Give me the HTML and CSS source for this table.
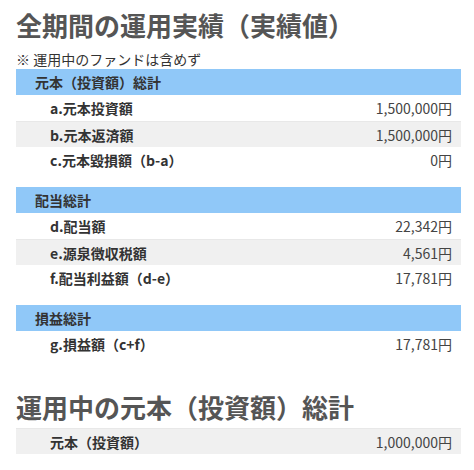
FILE: index.html
```html
<!DOCTYPE html>
<html lang="ja">
<head>
  <meta charset="UTF-8" />
  <meta name="viewport" content="width=device-width, initial-scale=1.0"/>
  <title>運用実績</title>
  <link rel="stylesheet" href="styles.css">
</head>
<body>
  <div class="container">
    <h1>全期間の運用実績（実績値）</h1>
    <p class="note">※ 運用中のファンドは含めず</p>

    <div class="group">
      <div class="group-head">元本（投資額）総計</div>
      <div class="row"><span class="label">a.元本投資額</span><span class="value">1,500,000円</span></div>
      <div class="row alt"><span class="label">b.元本返済額</span><span class="value">1,500,000円</span></div>
      <div class="row"><span class="label">c.元本毀損額（b-a）</span><span class="value">0円</span></div>
    </div>

    <div class="group">
      <div class="group-head">配当総計</div>
      <div class="row"><span class="label">d.配当額</span><span class="value">22,342円</span></div>
      <div class="row alt"><span class="label">e.源泉徴収税額</span><span class="value">4,561円</span></div>
      <div class="row"><span class="label">f.配当利益額（d-e）</span><span class="value">17,781円</span></div>
    </div>

    <div class="group">
      <div class="group-head">損益総計</div>
      <div class="row"><span class="label">g.損益額（c+f）</span><span class="value">17,781円</span></div>
    </div>

    <h1 class="second">運用中の元本（投資額）総計</h1>
    <div class="group">
      <div class="row alt"><span class="label">元本（投資額）</span><span class="value">1,000,000円</span></div>
    </div>
  </div>
</body>
</html>
```

FILE: styles.css
```css
* {
  margin: 0;
  padding: 0;
  box-sizing: border-box;
}

body {
  background: #ffffff;
  font-family: 'Noto Sans CJK JP', 'Noto Sans', sans-serif;
  color: #333;
}

.container {
  width: 445px;
  margin-left: 16px;
}

h1 {
  font-size: 26px;
  font-weight: bold;
  color: #555;
  line-height: 34px;
  padding-top: 8px;
}

h1.second {
  padding-top: 0;
  margin-top: 33px;
  margin-bottom: 4px;
}

.note {
  font-size: 14px;
  line-height: 18px;
  margin-top: 8px;
  margin-bottom: 1px;
}

.group {
  margin-bottom: 14px;
}

.group-head {
  background-color: #90c8f8;
  height: 26px;
  line-height: 26px;
  padding-left: 19px;
  font-size: 14px;
  font-weight: bold;
  color: #333;
}

.row {
  display: flex;
  justify-content: space-between;
  height: 26px;
  line-height: 26px;
  padding: 0 9px 0 34px;
  font-size: 14px;
}

.row.alt {
  background-color: #f0f0f0;
  border-top: 1px solid #e8e8e8;
}

.label {
  font-weight: bold;
}

.value {
  color: #444;
}
```
